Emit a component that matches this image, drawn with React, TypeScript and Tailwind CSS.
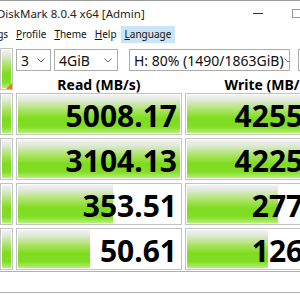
import { FC } from 'react'

const font = { fontFamily: '"Noto Sans", "Open Sans", sans-serif' }

const rows = [
  { read: '5008.17', readFill: 100, write: '4255.94', writeFill: 100 },
  { read: '3104.13', readFill: 100, write: '4225.85', writeFill: 100 },
  { read: '353.51', readFill: 58.6, write: '277.07', writeFill: 56.2 },
  { read: '50.61', readFill: 44.4, write: '126.92', writeFill: 50 },
]

const meter = 'bg-[linear-gradient(to_bottom,#f2f2f2_0%,#dfe9d8_14%,#a6e35a_42%,#7edc1f_62%,#82de25_84%,#b4ef78_100%)]'

const Chevron = () => (
  <svg width="8" height="5" viewBox="0 0 8 5" className="shrink-0">
    <polyline points="0.5,0.5 4,4 7.5,0.5" fill="none" stroke="#666" strokeWidth="1" />
  </svg>
)

const Select: FC<{ label: string; w: string; chevron?: boolean }> = ({ label, w, chevron = true }) => (
  <div className={`${w} h-[22px] shrink-0 border border-[#adadad] bg-white flex items-center justify-between pl-[4px] pr-[5px] text-[14px] text-[#111] whitespace-nowrap overflow-hidden`}>
    <span>{label}</span>
    {chevron && <Chevron />}
  </div>
)

const Cell: FC<{ value: string; fill: number }> = ({ value, fill }) => (
  <div className="relative w-[166px] h-[42px] shrink-0 border border-[#c3c3c3] bg-white p-[1px]">
    <div className={`h-full ${meter}`} style={{ width: `${fill}%` }} />
    <div className="absolute inset-0 flex items-center justify-end pr-[4px] pt-[4px] text-[30px] font-bold text-black leading-none">
      {value}
    </div>
  </div>
)

const App: FC = () => {
  return (
    <div style={font} className="w-[300px] h-[300px] overflow-hidden bg-white border-t border-[#9a9a9a] flex flex-col">
      {/* title bar */}
      <div className="h-[25px] flex items-center justify-between shrink-0">
        <div className="ml-[-40px] text-[11.5px] text-[#222] whitespace-nowrap">CrystalDiskMark 8.0.4 x64 [Admin]</div>
        <div className="flex items-center gap-[29px] shrink-0">
          <div className="w-[10px] h-[1px] bg-[#333]" />
          <div className="w-[9px] h-[9px] border border-[#999] mr-[-1px]" />
        </div>
      </div>
      {/* menu */}
      <div className="h-[17px] flex items-center text-[10px] text-[#111] whitespace-nowrap shrink-0">
        <div className="flex items-center h-full ml-[-58px]">
          <span className="px-[4px]">File</span>
          <span className="px-[4px]">Settin<span className="underline">g</span>s</span>
          <span className="px-[4px]"><span className="underline">P</span>rofile</span>
          <span className="px-[4px]"><span className="underline">T</span>heme</span>
          <span className="px-[4px]"><span className="underline">H</span>elp</span>
          <span className="px-[4px] h-full flex items-center bg-[#cce4f7]"><span className="underline">L</span>anguage</span>
        </div>
      </div>
      {/* controls + header */}
      <div className="flex gap-[3px] mt-[5px] shrink-0">
        <div className="relative w-[13px] h-[42px] shrink-0 border border-[#c3c3c3] p-[1px] bg-white">
          <div className={`h-full w-full ${meter}`} />
          <div className="absolute right-0 bottom-0 w-0 h-0 border-l-[6px] border-l-transparent border-b-[6px] border-b-[#f07a10]" />
        </div>
        <div className="flex flex-col h-[42px]">
          <div className="flex items-center gap-[3px] mt-[1px]">
            <Select label="3" w="w-[35px]" />
            <Select label="4GiB" w="w-[64px]" />
            <div className="w-[5px]" />
            <Select label="H: 80% (1490/1863GiB)" w="w-[161px]" />
            <div className="w-[2px]" />
            <Select label="MB/s" w="w-[60px]" chevron={false} />
          </div>
          <div className="flex gap-[3px] h-[19px] pt-[6px] leading-[16px] text-[14px] font-bold text-black whitespace-nowrap">
            <div className="w-[166px] text-center">Read (MB/s)</div>
            <div className="w-[166px] text-center">Write (MB/s)</div>
          </div>
        </div>
      </div>
      {/* results */}
      <div className="flex flex-col gap-[3px] mt-[3px] shrink-0">
        {rows.map((r, i) => (
          <div key={i} className="flex gap-[3px]">
            <div className="w-[13px] h-[42px] shrink-0 border border-[#c3c3c3] p-[1px] bg-white">
              <div className={`h-full w-full ${meter}`} />
            </div>
            <Cell value={r.read} fill={r.readFill} />
            <Cell value={r.write} fill={r.writeFill} />
          </div>
        ))}
      </div>
      {/* comment */}
      <div className="mt-[1px] h-[22px] border-y border-[#b0b0b0] w-full shrink-0" />
    </div>
  )
}

export default App
